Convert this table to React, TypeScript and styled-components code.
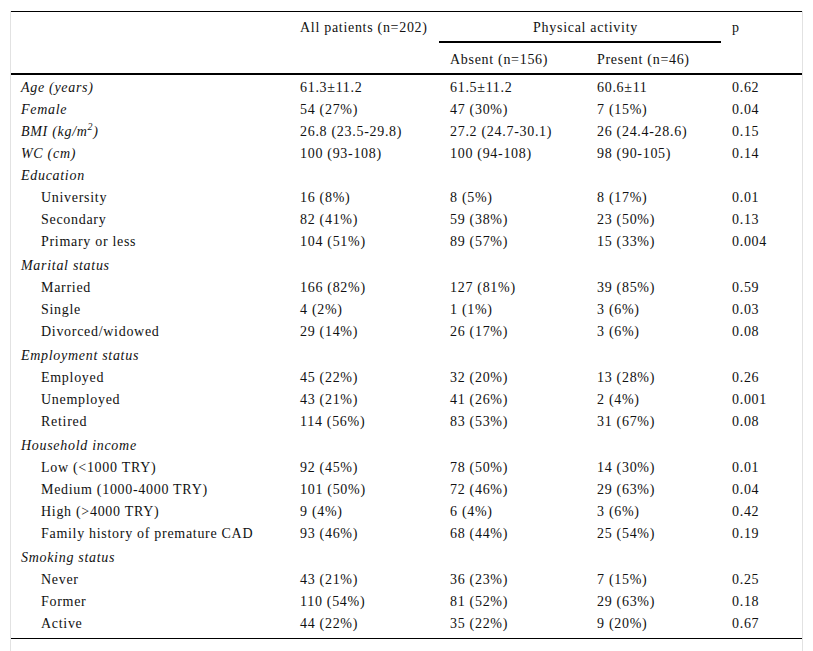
import React from "react";
import styled, { createGlobalStyle } from "styled-components";

const Global = createGlobalStyle`
  html, body { margin: 0; padding: 0; background: #fff; }
  body { font-family: "Liberation Serif", "Times New Roman", serif; color: #111; }
`;

const Frame = styled.div`
  margin: 11px 0 0 10px;
  width: 791px;
  min-height: 660px;
  border-left: 1px solid #e2e2e2;
  border-right: 1px solid #e2e2e2;
`;

const Table = styled.table`
  width: 791px;
  border-collapse: separate;
  border-spacing: 0;
  table-layout: fixed;
  font-size: 14px;
  letter-spacing: 0.7px;
  line-height: 16px;
  border-top: 1px solid #000;
  border-bottom: 1px solid #000;
`;

const HeadCell = styled.th<{ $center?: boolean; $rule?: boolean; $last?: boolean }>`
  font-weight: normal;
  text-align: ${(p) => (p.$center ? "center" : "left")};
  vertical-align: top;
  padding: 8px 0 0 11px;
  height: 21px;
  border-bottom: ${(p) => (p.$rule || p.$last ? "2px solid #000" : "none")};
`;

const SubHeadCell = styled.th`
  font-weight: normal;
  text-align: left;
  vertical-align: top;
  padding: 9px 0 0 11px;
  height: 21px;
  border-bottom: 2px solid #000;
`;

const Row = styled.tr<{ $tall?: boolean }>`
  height: ${(p) => (p.$tall ? "24px" : "22px")};
`;

const Label = styled.td<{ $indent?: boolean; $italic?: boolean }>`
  padding: 0 0 1px ${(p) => (p.$indent ? "30px" : "10px")};
  font-style: ${(p) => (p.$italic ? "italic" : "normal")};
  vertical-align: bottom;
  white-space: nowrap;
`;

const Cell = styled.td`
  padding: 0 0 1px 11px;
  vertical-align: bottom;
  white-space: nowrap;
`;

const Sup = styled.sup`
  font-size: 10px;
  line-height: 0;
`;

const Spacer = styled.tr`
  height: 5px;
`;

type R = {
  label: React.ReactNode;
  italic?: boolean;
  indent?: boolean;
  tall?: boolean;
  v?: [string, string, string, string];
};

const rows: R[] = [
  { label: "Age (years)", italic: true, v: ["61.3±11.2", "61.5±11.2", "60.6±11", "0.62"] },
  { label: "Female", italic: true, v: ["54 (27%)", "47 (30%)", "7 (15%)", "0.04"] },
  {
    label: (
      <>
        BMI (kg/m<Sup>2</Sup>)
      </>
    ),
    italic: true,
    v: ["26.8 (23.5-29.8)", "27.2 (24.7-30.1)", "26 (24.4-28.6)", "0.15"],
  },
  { label: "WC (cm)", italic: true, v: ["100 (93-108)", "100 (94-108)", "98 (90-105)", "0.14"] },
  { label: "Education", italic: true },
  { label: "University", indent: true, v: ["16 (8%)", "8 (5%)", "8 (17%)", "0.01"] },
  { label: "Secondary", indent: true, v: ["82 (41%)", "59 (38%)", "23 (50%)", "0.13"] },
  { label: "Primary or less", indent: true, v: ["104 (51%)", "89 (57%)", "15 (33%)", "0.004"] },
  { label: "Marital status", italic: true, tall: true },
  { label: "Married", indent: true, v: ["166 (82%)", "127 (81%)", "39 (85%)", "0.59"] },
  { label: "Single", indent: true, v: ["4 (2%)", "1 (1%)", "3 (6%)", "0.03"] },
  { label: "Divorced/widowed", indent: true, v: ["29 (14%)", "26 (17%)", "3 (6%)", "0.08"] },
  { label: "Employment status", italic: true, tall: true },
  { label: "Employed", indent: true, v: ["45 (22%)", "32 (20%)", "13 (28%)", "0.26"] },
  { label: "Unemployed", indent: true, v: ["43 (21%)", "41 (26%)", "2 (4%)", "0.001"] },
  { label: "Retired", indent: true, v: ["114 (56%)", "83 (53%)", "31 (67%)", "0.08"] },
  { label: "Household income", italic: true, tall: true },
  { label: "Low (<1000 TRY)", indent: true, v: ["92 (45%)", "78 (50%)", "14 (30%)", "0.01"] },
  { label: "Medium (1000-4000 TRY)", indent: true, v: ["101 (50%)", "72 (46%)", "29 (63%)", "0.04"] },
  { label: "High (>4000 TRY)", indent: true, v: ["9 (4%)", "6 (4%)", "3 (6%)", "0.42"] },
  { label: "Family history of premature CAD", indent: true, v: ["93 (46%)", "68 (44%)", "25 (54%)", "0.19"] },
  { label: "Smoking status", italic: true, tall: true },
  { label: "Never", indent: true, v: ["43 (21%)", "36 (23%)", "7 (15%)", "0.25"] },
  { label: "Former", indent: true, v: ["110 (54%)", "81 (52%)", "29 (63%)", "0.18"] },
  { label: "Active", indent: true, v: ["44 (22%)", "35 (22%)", "9 (20%)", "0.67"] },
];

export default function App() {
  return (
    <>
      <Global />
      <Frame>
        <Table>
          <colgroup>
            <col style={{ width: 278 }} />
            <col style={{ width: 150 }} />
            <col style={{ width: 147 }} />
            <col style={{ width: 135 }} />
            <col style={{ width: 81 }} />
          </colgroup>
          <thead>
            <tr>
              <HeadCell rowSpan={2} $last />
              <HeadCell rowSpan={2} $last>All patients (n=202)</HeadCell>
              <HeadCell colSpan={2} $center $rule>
                Physical activity
              </HeadCell>
              <HeadCell rowSpan={2} $last>p</HeadCell>
            </tr>
            <tr>
              <SubHeadCell>Absent (n=156)</SubHeadCell>
              <SubHeadCell>Present (n=46)</SubHeadCell>
            </tr>
          </thead>
          <tbody>
            {rows.map((r, i) => (
              <Row key={i} $tall={r.tall}>
                <Label $indent={r.indent} $italic={r.italic}>
                  {r.label}
                </Label>
                {r.v ? r.v.map((c, j) => <Cell key={j}>{c}</Cell>) : [0, 1, 2, 3].map((j) => <Cell key={j} />)}
              </Row>
            ))}
            <Spacer>
              <Cell colSpan={5} />
            </Spacer>
          </tbody>
        </Table>
      </Frame>
    </>
  );
}
